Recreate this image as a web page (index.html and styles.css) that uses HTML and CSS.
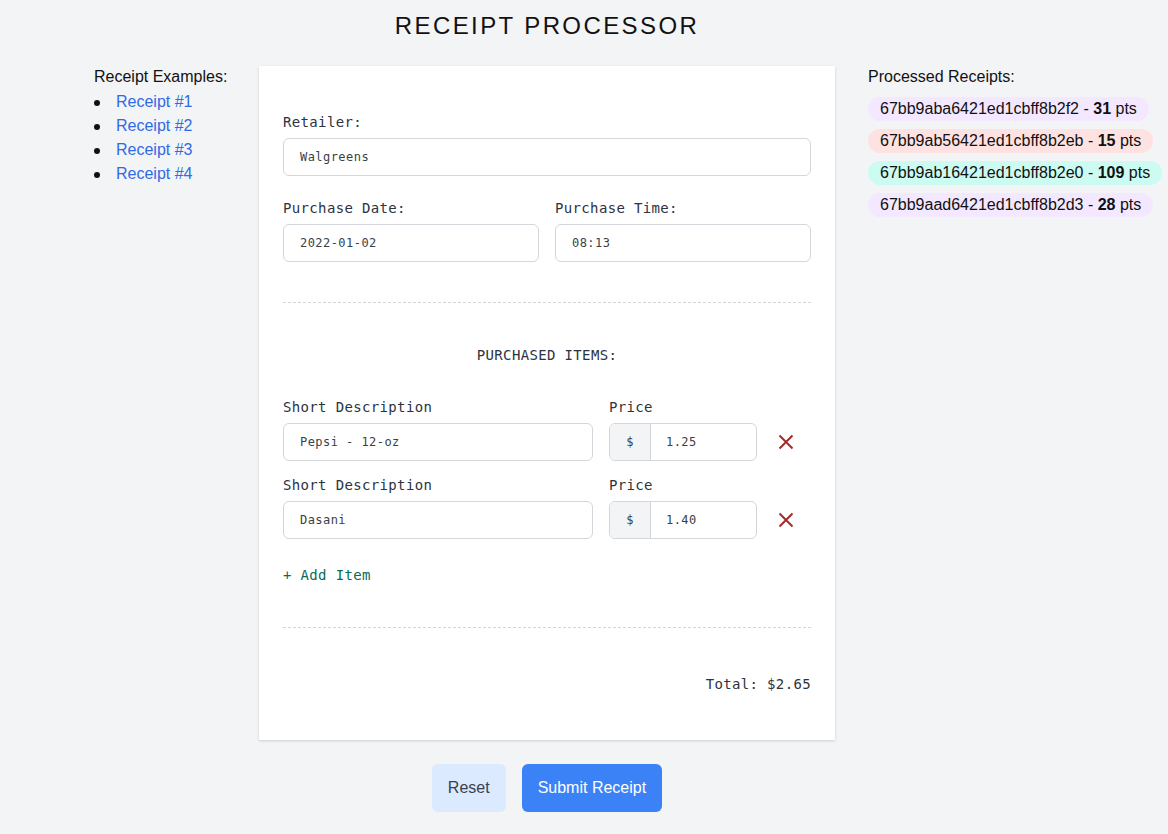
FILE: index.html
```html
<!DOCTYPE html>
<html>
<head>
<meta charset="utf-8">
<link rel="stylesheet" href="styles.css">
</head>
<body>
<div class="page">
  <aside class="examples">
    <div class="side-title">Receipt Examples:</div>
    <ul class="example-list">
      <li><a href="#">Receipt #1</a></li>
      <li><a href="#">Receipt #2</a></li>
      <li><a href="#">Receipt #3</a></li>
      <li><a href="#">Receipt #4</a></li>
    </ul>
  </aside>
  <main class="main">
    <h1 class="title">RECEIPT PROCESSOR</h1>
    <form class="card">
      <div class="field">
        <label class="label">Retailer:</label>
        <div class="input">Walgreens</div>
      </div>
      <div class="row2">
        <div class="field">
          <label class="label">Purchase Date:</label>
          <div class="input">2022-01-02</div>
        </div>
        <div class="field">
          <label class="label">Purchase Time:</label>
          <div class="input">08:13</div>
        </div>
      </div>
      <hr class="dash">
      <div class="section-title">PURCHASED ITEMS:</div>
      <div class="items">
        <div class="item">
          <div class="field desc">
            <label class="label">Short Description</label>
            <div class="input">Pepsi - 12-oz</div>
          </div>
          <div class="field price">
            <label class="label">Price</label>
            <div class="price-group"><span class="addon">$</span><span class="price-input">1.25</span></div>
          </div>
          <button type="button" class="remove"><svg width="18" height="18" viewBox="0 0 18 18"><path d="M2.5 2.5 L15.5 15.5 M15.5 2.5 L2.5 15.5" stroke="#a52a2a" stroke-width="2" fill="none"/></svg></button>
        </div>
        <div class="item">
          <div class="field desc">
            <label class="label">Short Description</label>
            <div class="input">Dasani</div>
          </div>
          <div class="field price">
            <label class="label">Price</label>
            <div class="price-group"><span class="addon">$</span><span class="price-input">1.40</span></div>
          </div>
          <button type="button" class="remove"><svg width="18" height="18" viewBox="0 0 18 18"><path d="M2.5 2.5 L15.5 15.5 M15.5 2.5 L2.5 15.5" stroke="#a52a2a" stroke-width="2" fill="none"/></svg></button>
        </div>
      </div>
      <div class="add-item">+ Add Item</div>
      <hr class="dash dash2">
      <div class="total">Total: $2.65</div>
    </form>
    <div class="buttons">
      <button type="button" class="btn reset">Reset</button>
      <button type="button" class="btn submit">Submit Receipt</button>
    </div>
  </main>
  <aside class="processed">
    <div class="side-title">Processed Receipts:</div>
    <div class="pills">
      <div class="pill lav">67bb9aba6421ed1cbff8b2f2 - <b>31</b> pts</div>
      <div class="pill pink">67bb9ab56421ed1cbff8b2eb - <b>15</b> pts</div>
      <div class="pill teal">67bb9ab16421ed1cbff8b2e0 - <b>109</b> pts</div>
      <div class="pill lav">67bb9aad6421ed1cbff8b2d3 - <b>28</b> pts</div>
    </div>
  </aside>
</div>
</body>
</html>
```
FILE: styles.css
```css
* { box-sizing: border-box; }
html, body { margin: 0; padding: 0; }
body {
  background: #f3f4f6;
  font-family: "Liberation Sans", Arial, sans-serif;
  color: #111;
  width: 1168px;
  height: 834px;
  overflow: hidden;
}
.page {
  display: grid;
  grid-template-columns: 133px 576px 300px;
  column-gap: 32px;
  padding-left: 94px;
}
.examples, .processed { padding-top: 68px; }
.side-title { font-size: 16px; line-height: 18px; color: #111; white-space: nowrap; }
.example-list {
  margin: 4px 0 0;
  padding: 0;
  list-style: none;
  font-size: 16px;
  line-height: 24px;
}
.example-list li { display: flex; align-items: center; }
.example-list li::before {
  content: "";
  width: 6px;
  height: 6px;
  border-radius: 50%;
  background: #111;
  margin-left: 0;
  margin-right: 16px;
  margin-top: 1px;
}
.example-list a { color: #2f6be6; text-decoration: none; }
.processed { padding-left: 1px; }
.pills { display: flex; flex-direction: column; align-items: flex-start; gap: 8px; margin-top: 11px; }
.pill {
  font-size: 16px;
  line-height: 24px;
  height: 24px;
  padding: 0 12px;
  border-radius: 12px;
  white-space: nowrap;
}
.pill b { font-weight: 700; }
.lav { background: #f3e8ff; }
.pink { background: #fee2e2; }
.teal { background: #ccfbf1; }

.main { display: flex; flex-direction: column; align-items: stretch; }
.title {
  margin: 10px 0 0;
  height: 56px;
  font-size: 24px;
  line-height: 32px;
  font-weight: 400;
  letter-spacing: 2.4px;
  text-align: center;
  color: #111;
}
.card {
  background: #fff;
  box-shadow: 0 1px 3px rgba(0,0,0,0.1), 0 1px 2px rgba(0,0,0,0.06);
  padding: 46px 24px 46px;
  font-family: "DejaVu Sans Mono", "Liberation Mono", monospace;
}
.field { display: flex; flex-direction: column; }
.label {
  font-size: 14px;
  line-height: 20px;
  letter-spacing: 0.35px;
  color: #2d3340;
  margin-bottom: 6px;
}
.input, .price-group {
  height: 38px;
  border: 1px solid #d4d6dc;
  border-radius: 6px;
  font-size: 12px;
  letter-spacing: 0.45px;
  line-height: 36px;
  padding: 0 16px;
  color: #3b3f48;
  background: #fff;
}
.row2 {
  display: grid;
  grid-template-columns: 1fr 1fr;
  column-gap: 16px;
  margin-top: 22px;
}
.dash {
  border: none;
  border-top: 1px dashed #d4d6dc;
  margin: 40px 0 0;
  height: 0;
}
.section-title {
  text-align: center;
  font-size: 14px;
  line-height: 20px;
  letter-spacing: 0.35px;
  color: #2d3340;
  margin-top: 42px;
}
.items { display: flex; flex-direction: column; gap: 14px; margin-top: 32px; }
.item {
  display: grid;
  grid-template-columns: 310px 148px 26px;
  column-gap: 16px;
  align-items: end;
}
.price-group {
  display: flex;
  padding: 0;
  overflow: hidden;
}
.addon {
  width: 41px;
  background: #f3f4f6;
  border-right: 1px solid #d4d6dc;
  text-align: center;
  color: #3b3f48;
}
.price-input { padding-left: 15px; }
.remove {
  border: none;
  background: none;
  padding: 0;
  height: 38px;
  display: flex;
  align-items: center;
  justify-content: center;
  width: 26px;
}
.add-item {
  margin-top: 26px;
  font-size: 14px;
  line-height: 20px;
  letter-spacing: 0.35px;
  color: #0b6b57;
}
.dash2 { margin-top: 42px; }
.total {
  margin-top: 46px;
  text-align: right;
  font-size: 14px;
  line-height: 20px;
  letter-spacing: 0.35px;
  color: #2d3340;
}
.buttons {
  display: flex;
  justify-content: center;
  gap: 16px;
  margin-top: 24px;
}
.btn {
  height: 48px;
  border: none;
  border-radius: 6px;
  padding: 0 16px;
  font-family: "Liberation Sans", Arial, sans-serif;
  font-size: 16px;
}
.reset { background: #dbeafe; color: #374151; }
.submit { background: #3b82f6; color: #fff; }
```
